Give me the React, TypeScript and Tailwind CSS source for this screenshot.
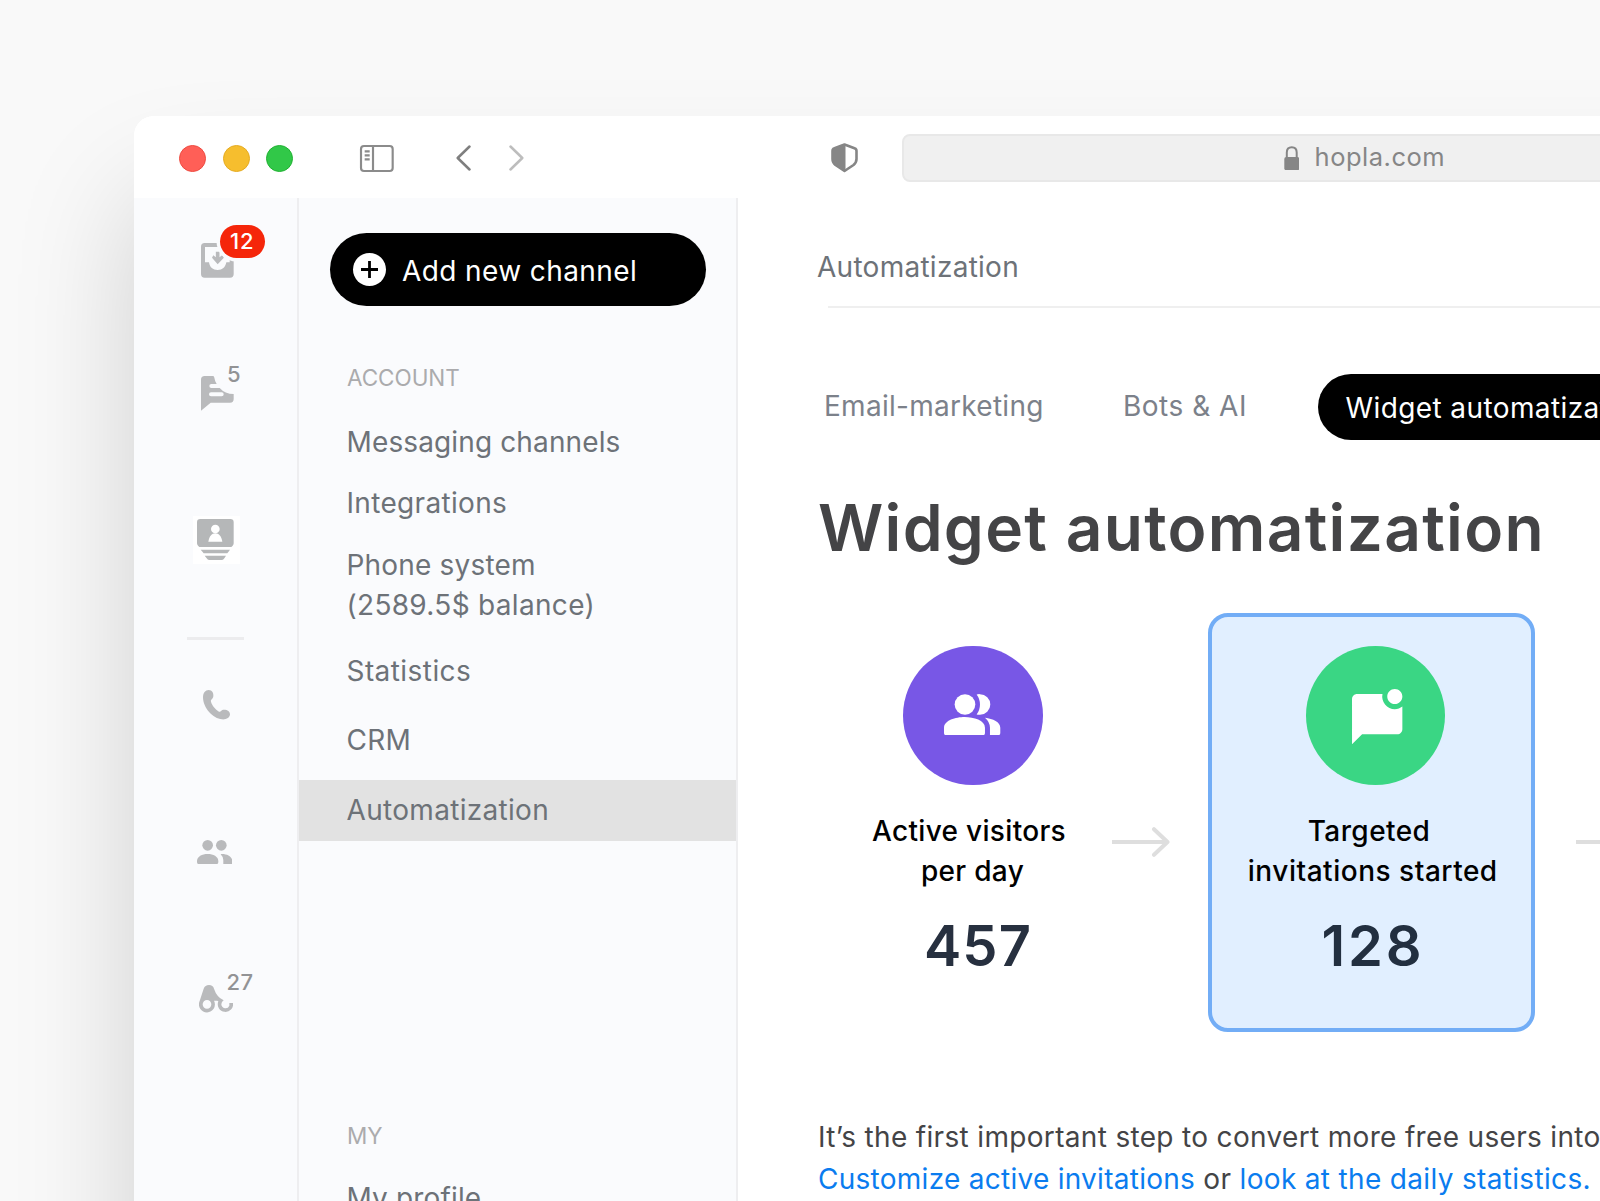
import type { ReactNode } from "react";
import { MdMarkChatUnread } from "react-icons/md";

function InboxIcon() {
  return (
    <svg className="h-[34.7px] w-[32.7px]" viewBox="0 0 98 104" fill="#b9babc">
      <path
        fillRule="evenodd"
        d="M11 0H87a11 11 0 0 1 11 11V93a11 11 0 0 1-11 11H11A11 11 0 0 1 0 93V11A11 11 0 0 1 11 0ZM12 12V58H24C26 73 36 81 50 81S73 73 76 58H86V12Z"
      />
      <path d="M44.500 26h11v17l8-6 5 7-18.500 20L33 44l4-7 7.500 6Z" />
    </svg>
  );
}

function ChatIcon() {
  return (
    <svg className="h-[34.7px] w-[32.7px]" viewBox="0 0 98 104" fill="#b9babc">
      <path
        fillRule="evenodd"
        d="M0 104V11A11 11 0 0 1 11 0H36Q40 0 40 5Q42 17 47 24H31a6 6 0 0 0 0 12H56Q72 54 98 54V69a11 11 0 0 1-11 11H29ZM30 49a6 6 0 0 0 0 12H62a6 6 0 0 0 0-12Z"
      />
    </svg>
  );
}

function ContactsIcon() {
  return (
    <svg className="h-[41px] w-[36.700px]" viewBox="0 0 110 123" fill="#b5b7b8">
      <path d="M10 0H100a10 10 0 0 1 10 10V73Q110 77 107 80L103 84H7L3 80Q0 77 0 73V10A10 10 0 0 1 10 0Z" />
      <circle cx="55" cy="30" r="13" fill="#fff" />
      <path d="M34 68C37 52 44 43 55 43S73 52 76 68Z" fill="#fff" />
      <path d="M11 92H99L91 103H20Z" />
      <path d="M23 110H87L82 118Q79 123 75 123H36Q32 123 29 118Z" />
    </svg>
  );
}

function PhoneIcon() {
  return (
    <svg className="h-[29.700px] w-[27px]" viewBox="0 0 81 89" fill="#b9babc">
      <path d="M17 0C28 0 32 10 31 19C30 28 22 28 24 35C27 46 37 58 48 65C54 66 54 59 63 59C74 59 81 65 81 73C81 83 70 89 57 88C30 86 0 54 0 22C0 9 7 0 17 0Z" />
    </svg>
  );
}

function PeopleIcon() {
  return (
    <svg className="h-[24.300px] w-[35.300px]" viewBox="0 0 106 73" fill="#b9babc">
      <circle cx="32" cy="16" r="16" />
      <circle cx="73" cy="16" r="16" />
      <path d="M0 63C0 50 15 42 32 42S64 50 64 63V66Q64 73 57 73H7Q0 73 0 66Z" />
      <path d="M71 42.500C91 41 106 51 106 63V73H79V60Q79 50 71 42.500Z" />
    </svg>
  );
}

function BinocularsIcon() {
  return (
    <svg className="h-[27.700px] w-[34px]" viewBox="0 0 102 83" fill="#b9babc">
      <path
        fillRule="evenodd"
        d="M2 48L14 11Q18 0 30 0Q42 0 45 11Q53 36 74 46A15 15 0 0 0 67 58A12.500 12.500 0 0 0 91 62V54H102A23 23 0 1 1 58 49Q58 47 54 47H45A24 24 0 1 1 2 48ZM24 45a13 13 0 1 0 0 26a13 13 0 0 0 0-26Z"
      />
    </svg>
  );
}

function SidebarToggleIcon() {
  return (
    <svg
      className="h-[27px] w-[33.700px] overflow-visible"
      viewBox="0 0 101 81"
      fill="none"
      stroke="#8b8b8b"
      strokeWidth="6.500"
    >
      <rect x="3" y="3" width="95" height="75" rx="9" />
      <path d="M39 3V78" />
      <path d="M14 19H29M14 31H29M14 43H29" />
    </svg>
  );
}

function Chevron({ left }: { left?: boolean }) {
  return (
    <svg
      className="h-[26px] w-[15px]"
      viewBox="0 0 15 26"
      fill="none"
      stroke={left ? "#7f7f7f" : "#bdbdbd"}
      strokeWidth="2.500"
      strokeLinecap="round"
      strokeLinejoin="round"
    >
      <path d={left ? "M13.500 1.500L1.700 13L13.500 24.500" : "M1.500 1.500L13.300 13L1.500 24.500"} />
    </svg>
  );
}

function ShieldIcon() {
  return (
    <svg className="h-[29.500px] w-[27px]" viewBox="0 0 27 29.500">
      <path
        d="M13.500 1.500L23.500 5.300Q25.500 6 25.500 8V16Q25.500 19.500 22.500 22L13.500 28L4.500 22Q1.500 19.500 1.500 16V8Q1.500 6 3.500 5.300Z"
        fill="none"
        stroke="#868686"
        strokeWidth="2.600"
        strokeLinejoin="round"
      />
      <path d="M14.500 1.500L3.500 5.300Q1.500 6 1.500 8V16Q1.500 19.500 4.500 22L14.500 28Z" fill="#868686" />
    </svg>
  );
}

function LockIcon() {
  return (
    <svg className="h-[24.500px] w-[15.500px]" viewBox="0 0 15.500 24.500">
      <path d="M2.800 12V6.500Q2.800 1.200 7.750 1.200T12.700 6.500V12" fill="none" stroke="#868686" strokeWidth="2" />
      <rect x="0.300" y="11" width="15" height="13.300" rx="2" fill="#868686" />
    </svg>
  );
}

function VisitorsIcon() {
  return (
    <svg className="h-[41.300px] w-[56.300px]" viewBox="0 0 169 124" fill="#fff">
      <circle cx="63" cy="31.500" r="31" />
      <path d="M98 1.500Q103 0 108 0.500A31 31 0 0 1 108 62.500Q103 63 98 61.500Q108 48 108 31.500T98 1.500Z" />
      <path d="M0 101C0 79 35 69 62 69S123 79 123 101V117Q123 124 116 124H7Q0 124 0 117Z" />
      <path d="M123 71C147 74 169 84 169 101V117Q169 124 162 124H138V101Q138 84 123 71Z" />
    </svg>
  );
}

function Arrow() {
  return (
    <svg
      className="h-[30px] w-[58px] shrink-0"
      viewBox="0 0 58 30"
      fill="none"
      stroke="#dedede"
      strokeWidth="4"
      strokeLinejoin="round"
    >
      <path d="M0 15H54" />
      <path d="M42 2.200L55.500 15L42 27.800" strokeLinecap="round" />
    </svg>
  );
}

function TrafficLight({ className }: { className: string }) {
  return <span className={`block size-[27px] rounded-full ${className}`} />;
}

function TitleBar() {
  return (
    <header className="flex h-[82px] items-center bg-white pt-[2px]">
      <div className="ml-[45.300px] flex gap-[16.300px]">
        <TrafficLight className="border-[1.500px] border-[#ee4a40] bg-[#ff5f57]" />
        <TrafficLight className="border-[1.500px] border-[#e5ab22] bg-[#f6be2e]" />
        <TrafficLight className="border-[1.500px] border-[#20b232] bg-[#31c848]" />
      </div>
      <div className="ml-[67.500px]">
        <SidebarToggleIcon />
      </div>
      <div className="ml-[61.500px] flex gap-[38.500px]">
        <Chevron left />
        <Chevron />
      </div>
      <div className="ml-[307px]">
        <ShieldIcon />
      </div>
      <div className="ml-[43.500px] flex h-[47.500px] w-[940px] shrink-0 items-center rounded-lg border-2 border-[#e8e8e8] bg-[#f0f0f0]">
        <div className="ml-[380px]">
          <LockIcon />
        </div>
        <span className="-mt-[2px] ml-[15.500px] text-[25.500px] leading-[30px] tracking-[0.500px] text-[#868686]">
          hopla.com
        </span>
      </div>
    </header>
  );
}

function RailItem({ className, icon, badge }: { className: string; icon: ReactNode; badge?: ReactNode }) {
  return (
    <div className={`relative w-fit ${className}`}>
      {icon}
      {badge}
    </div>
  );
}

function Rail() {
  return (
    <nav className="flex w-[163px] shrink-0 flex-col pt-[45px]">
      <RailItem
        className="ml-[67px]"
        icon={<InboxIcon />}
        badge={
          <span className="absolute top-[-18px] left-[18.700px] flex h-[32.700px] w-[45.300px] items-center justify-center rounded-full bg-[#f5260a] text-[22px] font-medium tracking-[1px] text-white ring-[3.500px] ring-[#fafbfd]">
            12
          </span>
        }
      />
      <RailItem
        className="mt-[98.300px] ml-[67px]"
        icon={<ChatIcon />}
        badge={
          <span className="absolute top-[-17px] left-[26px] text-[22px] leading-[30px] font-medium text-[#929395]">5</span>
        }
      />
      <RailItem
        className="mt-[105.300px] ml-[59.300px] bg-white pt-[3px] pr-[6px] pb-[4px] pl-[4px]"
        icon={<ContactsIcon />}
      />
      <hr className="mt-[73px] ml-[53px] w-[57px] border-0 border-t-[3px] border-[#ececee]" />
      <RailItem className="mt-[50.500px] ml-[69px]" icon={<PhoneIcon />} />
      <RailItem className="mt-[119.500px] ml-[63px]" icon={<PeopleIcon />} />
      <RailItem
        className="mt-[121px] ml-[65px]"
        icon={<BinocularsIcon />}
        badge={
          <span className="absolute top-[-17.500px] left-[27.500px] text-[22px] leading-[30px] font-medium tracking-[0.500px] text-[#929395]">
            27
          </span>
        }
      />
    </nav>
  );
}

function Section({ className, children }: { className: string; children: ReactNode }) {
  return (
    <h2 className={`pl-[48px] text-[22.500px] leading-[30px] font-normal tracking-[-0.050px] text-[#ababad] ${className}`}>
      {children}
    </h2>
  );
}

function Item({ className, children }: { className: string; children: ReactNode }) {
  return <a className={`block pl-[47.500px] leading-[40px] text-[#6d7278] ${className}`}>{children}</a>;
}

function Sidebar() {
  return (
    <aside className="flex w-[441px] shrink-0 flex-col border-x-[2.500px] border-[#eeeef0] pt-[35px] text-[28px]">
      <button className="ml-[31px] flex h-[73px] w-[376px] shrink-0 items-center rounded-full bg-black text-white">
        <span className="ml-[22.500px] flex size-[33px] items-center justify-center rounded-full bg-white">
          <svg className="size-[17px]" viewBox="0 0 17 17" stroke="#000" strokeWidth="2.800">
            <path d="M8.500 0V17M0 8.500H17" />
          </svg>
        </span>
        <span className="ml-[16.500px] pt-[2px] leading-[40px] tracking-[0.400px]">Add new channel</span>
      </button>
      <Section className="mt-[57px]">ACCOUNT</Section>
      <Item className="mt-[29px] tracking-[0.130px]">Messaging channels</Item>
      <Item className="mt-[21px] tracking-[0.320px]">Integrations</Item>
      <Item className="mt-[21.500px] tracking-[0.180px]">
        Phone system
        <br />
        <span className="tracking-[0.310px]">(2589.5$ balance)</span>
      </Item>
      <Item className="mt-[26.500px] tracking-[0.430px]">Statistics</Item>
      <Item className="mt-[29px] tracking-[0.250px]">CRM</Item>
      <Item className="mt-[20px] h-[61px] bg-[#e2e2e2] pt-[9.500px] tracking-[0.310px]">Automatization</Item>
      <Section className="mt-[279.500px]">MY</Section>
      <Item className="mt-[27px] tracking-[0.150px]">My profile</Item>
    </aside>
  );
}

function Stats() {
  return (
    <div className="mt-[46.500px] flex h-[419px] text-center text-[28px] font-medium text-black">
      <div className="ml-[100px] flex w-[264px] shrink-0 flex-col items-center pt-[32.500px]">
        <div className="ml-[6px] flex size-[139.500px] items-center justify-center rounded-full bg-[#7857e6] pr-[1px] pb-[2px]">
          <VisitorsIcon />
        </div>
        <p className="mt-[26px] leading-[40px] tracking-[0.320px]">
          <span className="-ml-[2px]">Active visitors</span>
          <br />
          <span className="ml-[5px]">per day</span>
        </p>
        <p className="mt-[22px] ml-[16px] text-[56px] leading-[66px] font-semibold tracking-[1.100px] text-[#27303f]">457</p>
      </div>
      <div className="mt-[213.500px] ml-[10px] shrink-0">
        <Arrow />
      </div>
      <div className="ml-[38px] flex w-[327px] shrink-0 flex-col items-center rounded-[20px] border-4 border-[#72adf6] bg-[#e1efff] pt-[28.500px]">
        <div className="ml-[8px] flex size-[139.500px] items-start justify-center rounded-full bg-[#3ad684] pt-[43px]">
          <MdMarkChatUnread className="ml-[3px] size-[60.400px] text-white" />
        </div>
        <p className="mt-[26px] leading-[40px]">
          <span className="-ml-[5px] tracking-[0.430px]">Targeted</span>
          <br />
          <span className="ml-[2.500px] tracking-[0.520px]">invitations started</span>
        </p>
        <p className="mt-[22px] ml-[3px] text-[56px] leading-[66px] font-semibold tracking-[2.800px] text-[#222f40]">128</p>
      </div>
      <div className="mt-[213.500px] ml-[41px] shrink-0">
        <Arrow />
      </div>
    </div>
  );
}

function Main() {
  return (
    <main className="flex w-[1100px] shrink-0 flex-col bg-white pt-[49px] text-[28px]">
      <p className="pl-[79px] leading-[40px] tracking-[0.270px] text-[#6d7278]">Automatization</p>
      <hr className="mt-[19px] ml-[90px] border-0 border-t-[2.500px] border-[#efefef]" />
      <div className="mt-[66px] flex h-[65.500px] leading-[40px] whitespace-nowrap text-[#7c818a]">
        <a className="ml-[86px] w-[299px] shrink-0 pt-[11.500px] tracking-[0.280px]">Email-marketing</a>
        <a className="w-[195px] shrink-0 pt-[11.500px] tracking-[0.500px]">Bots &amp; AI</a>
        <a className="shrink-0 rounded-full bg-black px-[27.500px] pt-[14px] tracking-[0.400px] text-white">
          Widget automatization
        </a>
      </div>
      <h1 className="mt-[49px] pl-[80px] text-[64px] leading-[78px] font-semibold tracking-[1.300px] text-[#444446]">
        Widget automatization
      </h1>
      <Stats />
      <p className="mt-[85px] pl-[80px] leading-[41.700px] tracking-[0.330px] whitespace-nowrap text-[#444446]">
        It’s the first important step to convert more free users into paying
        <br />
        <a className="tracking-[0.270px] text-[#0a7cef]">Customize active invitations</a> or{" "}
        <a className="tracking-[0.330px] text-[#0a7cef]">look at the daily statistics.</a>
      </p>
    </main>
  );
}

export default function App() {
  return (
    <div className="h-[1201px] w-[1600px] overflow-hidden bg-[#f9f9f9] pt-[116px] pl-[134px] font-[Inter,sans-serif]">
      <div className="h-[1500px] w-[1900px] overflow-hidden rounded-[20px] bg-white shadow-[0_80px_120px_rgba(0,0,0,0.17)]">
        <TitleBar />
        <div className="flex h-full bg-[#fafbfd]">
          <Rail />
          <Sidebar />
          <Main />
        </div>
      </div>
    </div>
  );
}
